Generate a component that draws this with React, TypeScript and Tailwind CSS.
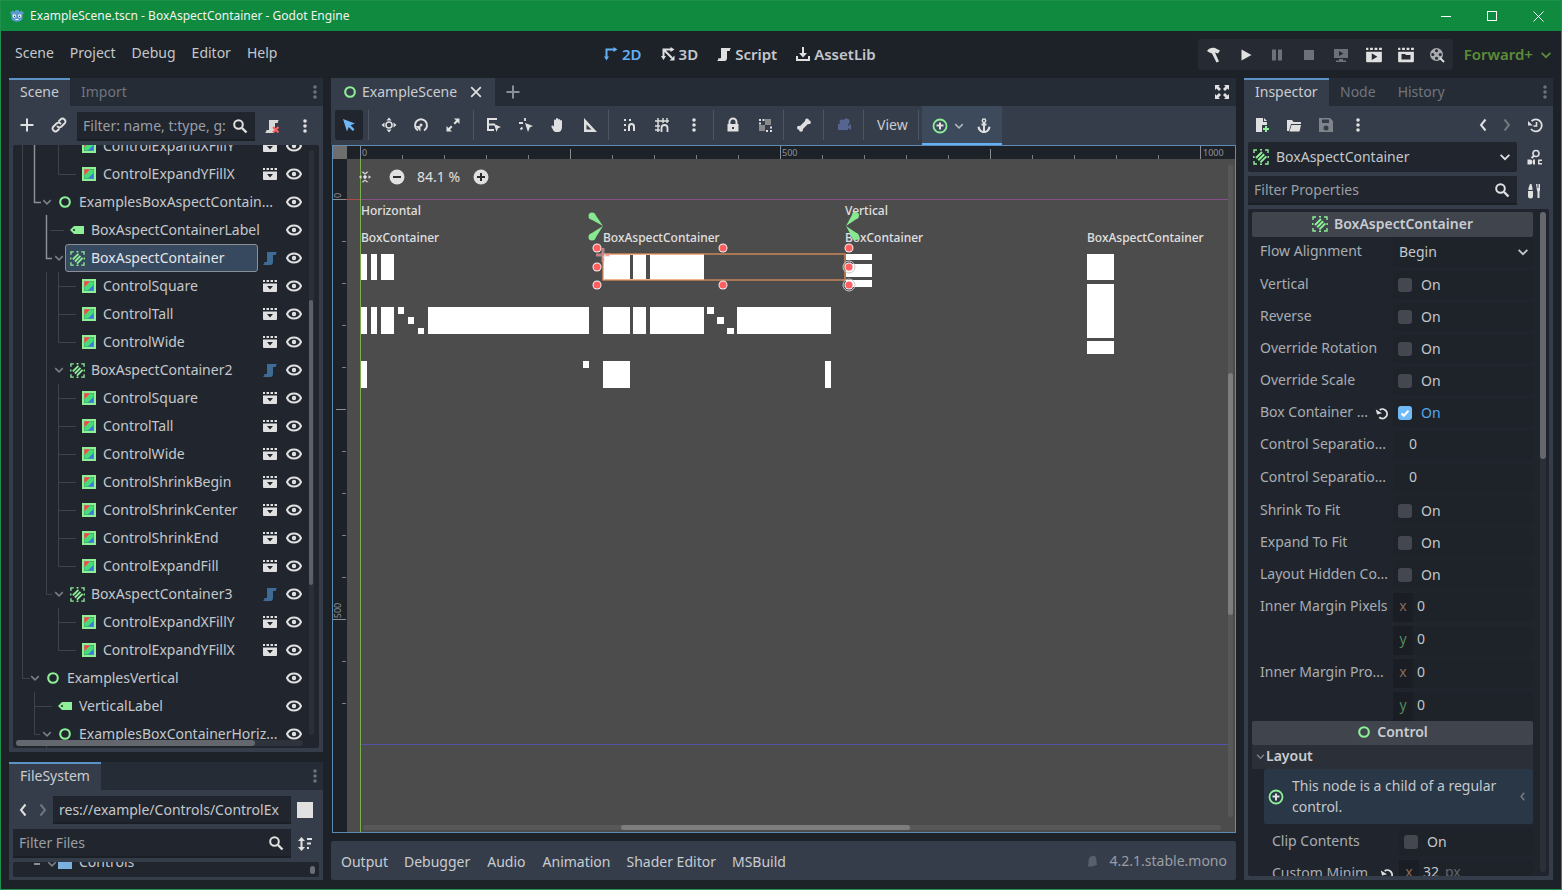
import type { ReactNode } from "react";

const green = "#8eef97";

function Svg({ size = 16, children, className }: { size?: number; children: ReactNode; className?: string }) {
  return (
    <svg width={size} height={size} viewBox="0 0 16 16" className={"shrink-0 " + (className ?? "")}>
      {children}
    </svg>
  );
}

const Dots = ({ color = "#e0e0e0" }: { color?: string }) => (
  <Svg>
    <circle cx="8" cy="3" r="1.800" fill={color} />
    <circle cx="8" cy="8" r="1.800" fill={color} />
    <circle cx="8" cy="13" r="1.800" fill={color} />
  </Svg>
);
const Search = () => (
  <Svg>
    <circle cx="6.500" cy="6.500" r="4.300" fill="none" stroke="#e0e0e0" strokeWidth="2" />
    <path d="M10 10l4.500 4.500" stroke="#e0e0e0" strokeWidth="2.400" />
  </Svg>
);
const Eye = () => (
  <Svg>
    <path d="M8 3.500C4.500 3.500 2 5.800 1 8c1 2.200 3.500 4.500 7 4.500s6-2.300 7-4.500c-1-2.200-3.500-4.500-7-4.500z" fill="none" stroke="#e0e0e0" strokeWidth="2" />
    <circle cx="8" cy="8" r="2.200" fill="#e0e0e0" />
  </Svg>
);
const Clapper = () => (
  <Svg>
    <path d="M1 2h2v2H1zM4.500 2h2.500v2H4.500zM8.500 2H11v2H8.500zM12.500 2H15v2h-2.500z" fill="#e0e0e0" />
    <path d="M1 5.500h14V13a1 1 0 0 1-1 1H2a1 1 0 0 1-1-1z" fill="#e0e0e0" />
    <path d="M5 8h6l-3 3.500z" fill="#21262e" />
  </Svg>
);
const ClapperPlay = () => (
  <Svg size={18}>
    <path d="M1 1.500h2v2H1zM4.500 1.500h2.500v2H4.500zM8.500 1.500H11v2H8.500zM12.500 1.500H15v2h-2.500z" fill="#e0e0e0" />
    <path d="M1 5h14v8.500a1 1 0 0 1-1 1H2a1 1 0 0 1-1-1z" fill="#e0e0e0" />
    <path d="M6 6.500l5 3-5 3z" fill="#262b33" />
  </Svg>
);
const ClapperFolder = () => (
  <Svg size={18}>
    <path d="M1 1.500h2v2H1zM4.500 1.500h2.500v2H4.500zM8.500 1.500H11v2H8.500zM12.500 1.500H15v2h-2.500z" fill="#e0e0e0" />
    <path d="M1 5h14v8.500a1 1 0 0 1-1 1H2a1 1 0 0 1-1-1z" fill="#e0e0e0" />
    <path d="M4 7h3l1 1h4v4H4z" fill="#262b33" />
  </Svg>
);
const Ring = ({ size = 14 }: { size?: number }) => (
  <Svg size={size}>
    <circle cx="8" cy="8" r="5.500" fill="none" stroke={green} strokeWidth="2.400" />
  </Svg>
);
const ColorSquare = () => (
  <Svg size={14}>
    <path d="M2.500 2.500h11v11h-11z" fill="#45dd78" />
    <path d="M2.500 2.500h7l-7 7z" fill="#ff4354" />
    <path d="M13.500 6.500v7h-7z" fill="#3a78e0" />
    <rect x="1.200" y="1.200" width="13.600" height="13.600" fill="none" stroke={green} strokeWidth="2.400" />
  </Svg>
);
const BoxAspect = ({ size = 16 }: { size?: number }) => (
  <Svg size={size}>
    <path d="M3 9L9 3M5.200 11.200L11.200 5.200M7.400 13.400L13.400 7.400" stroke={green} strokeWidth="2" fill="none" />
    <path d="M1 4V1h3M12 1h3v3M15 12v3h-3M4 15H1v-3M.8 7v2M15.200 7v2M7 .8h2M7 15.200h2" stroke={green} strokeWidth="1.400" fill="none" />
  </Svg>
);
const Tag = () => (
  <Svg>
    <path d="M1 8l4-4h10v8H5z" fill={green} />
    <circle cx="5" cy="8" r="1" fill="#21262e" />
  </Svg>
);
const scrollPath = "M5 2h10c-.8.500-1.200 1.500-1.200 3H11v7c0 2-1 3-2.500 3H1c.8-.5 1.300-1.300 1.500-3H5z";
const ScriptBlue = () => (
  <Svg>
    <path d={scrollPath} fill="#3f6c96" />
  </Svg>
);
const ScriptLight = () => (
  <Svg>
    <path d={scrollPath} fill="#e0e0e0" />
    <path d="M2.500 12.500h2" stroke="#9a9a9a" strokeWidth="1" />
  </Svg>
);
const ScriptRemove = () => (
  <Svg>
    <path d={scrollPath} fill="#d8d8d8" />
    <path d="M9 9l5.500 5.500M14.500 9L9 14.500" stroke="#ff5f5f" strokeWidth="2" />
  </Svg>
);
const Plus = ({ color = "#e0e0e0" }: { color?: string }) => (
  <Svg>
    <path d="M8 1.500v13M1.500 8h13" stroke={color} strokeWidth="2" />
  </Svg>
);
const LinkIcon = () => (
  <Svg>
    <g fill="none" stroke="#e0e0e0" strokeWidth="1.800" strokeLinecap="round">
      <path d="M6.500 9.500a2.800 2.800 0 0 0 4 0l3-3a2.800 2.800 0 0 0-4-4L8 4" />
      <path d="M9.500 6.500a2.800 2.800 0 0 0-4 0l-3 3a2.800 2.800 0 0 0 4 4L8 12" />
    </g>
  </Svg>
);
const Back = ({ color = "#e0e0e0", size = 16 }: { color?: string; size?: number }) => (
  <Svg size={size}>
    <path d="M10.500 2.500L6 8l4.500 5.500" fill="none" stroke={color} strokeWidth="2" />
  </Svg>
);
const Forward = ({ color = "#70757d" }: { color?: string }) => (
  <Svg>
    <path d="M5.500 2.500L10 8l-4.500 5.500" fill="none" stroke={color} strokeWidth="2" />
  </Svg>
);
const Chevron = ({ color = "#c4c7cc", size = 14 }: { color?: string; size?: number }) => (
  <Svg size={size}>
    <path d="M3 5.500L8 10.500l5-5" fill="none" stroke={color} strokeWidth="2" />
  </Svg>
);
const Reset = ({ color = "#e0e0e0" }: { color?: string }) => (
  <Svg size={15}>
    <path d="M5 4.200A5 5 0 1 1 4.500 12" fill="none" stroke={color} strokeWidth="2" />
    <path d="M1.500 3v5.500H7z" fill={color} transform="rotate(-15 4 6)" />
  </Svg>
);
const CircleBtn = ({ plus }: { plus?: boolean }) => (
  <Svg>
    <circle cx="8" cy="8" r="7.500" fill="#e0e0e0" />
    <path d={plus ? "M4 8h8M8 4v8" : "M4 8h8"} stroke="#2c2c2c" strokeWidth="2" />
  </Svg>
);
const GreenAdd = () => (
  <Svg>
    <circle cx="8" cy="8" r="6.500" fill="none" stroke={green} strokeWidth="1.800" />
    <path d="M4.500 7.500h7M8 4.500v7" stroke="#e0e0e0" strokeWidth="2" />
  </Svg>
);

// toolbar icons of the canvas
const ToolIcons: Record<string, ReactNode> = {
  select: (
    <Svg>
      <path d="M2 2l12 4.500-4.500 1.800 4 4-1.700 1.700-4-4L6 14.500z" fill="#6fb8f5" />
    </Svg>
  ),
  move: (
    <Svg>
      <path d="M8 .5l2.500 3h-5zM8 15.500l-2.500-3h5zM.5 8l3-2.500v5zM15.500 8l-3 2.500v-5z" fill="#e0e0e0" />
      <circle cx="8" cy="8" r="3" fill="none" stroke="#e0e0e0" strokeWidth="1.600" />
    </Svg>
  ),
  rotate: (
    <Svg>
      <path d="M5 13.500A6 6 0 1 1 11 13.500" fill="none" stroke="#e0e0e0" strokeWidth="2" />
      <path d="M2.500 9h5v5.500z" fill="#e0e0e0" />
      <circle cx="8" cy="8" r="1.500" fill="#e0e0e0" />
    </Svg>
  ),
  scale: (
    <Svg>
      <path d="M9 1.500h5.500V7L12.500 5 10 7.500 8.500 6 11 3.500zM7 14.500H1.500V9L3.500 11 6 8.500 7.500 10 5 12.500z" fill="#e0e0e0" />
    </Svg>
  ),
  list: (
    <Svg>
      <path d="M1 1h10v2H3v3.500h6v2H3V12h5v2H1z" fill="#e0e0e0" />
      <path d="M8 7l7 3-3 1.200L10.500 15z" fill="#e0e0e0" />
    </Svg>
  ),
  pivot: (
    <Svg>
      <path d="M1 6h4M7 1v3M2.500 12.500l2-2" stroke="#e0e0e0" strokeWidth="1.800" />
      <path d="M7 6l8 3-3 1.300L10 15z" fill="#e0e0e0" />
    </Svg>
  ),
  hand: (
    <Svg>
      <path d="M4 7V3.500a1 1 0 0 1 2 0V2a1 1 0 0 1 2 0v1a1 1 0 0 1 2 0v1a1 1 0 0 1 2 0v6c0 3-1.500 5-4 5H6c-2 0-3-2-4.500-5-.5-1.200 1-2 2-1L4 10z" fill="#e0e0e0" />
    </Svg>
  ),
  ruler: (
    <Svg>
      <path d="M2 1v14h13zM4.500 7.500l5 5h-5z" fill="#e0e0e0" fillRule="evenodd" />
    </Svg>
  ),
  snap: (
    <Svg>
      <path d="M6 14V9.500a3.500 3.500 0 0 1 7 0V14h-2V9.500a1.500 1.500 0 0 0-3 0V14z" fill="#e0e0e0" />
      <path d="M2 2h2v2H2zM7 2h2v2H7zM2 7h2v2H2zM2 12h2v2H2z" fill="#e0e0e0" />
    </Svg>
  ),
  grid: (
    <Svg>
      <path d="M1 4h14M1 9h5M1 13h5M4 1v14M9 1v5M13 1v5" stroke="#e0e0e0" strokeWidth="1.400" />
      <path d="M7.500 15v-4a3 3 0 0 1 6 0v4" fill="none" stroke="#e0e0e0" strokeWidth="1.800" />
    </Svg>
  ),
  dots: <Dots />,
  lock: (
    <Svg>
      <path d="M4.500 7V5a3.500 3.500 0 0 1 7 0v2" fill="none" stroke="#e0e0e0" strokeWidth="2" />
      <path d="M2.500 7h11v7.500h-11zM7 10v2h2v-2z" fill="#e0e0e0" fillRule="evenodd" />
    </Svg>
  ),
  group: (
    <Svg>
      <path d="M8 8h-6v6h6zM8 2h6v6H8z" fill="#8a8a8a" />
      <path d="M2 2h2v2H2zM5.500 2h2v2h-2zM2 5.500h2v2H2zM13 13h2v2h-2zM9 13h2v2H9zM13 9.500h2v2h-2z" fill="#e0e0e0" />
    </Svg>
  ),
  bone: (
    <Svg>
      <path d="M5 11l6-6" stroke="#e0e0e0" strokeWidth="4" />
      <circle cx="11" cy="3.500" r="2" fill="#e0e0e0" />
      <circle cx="12.800" cy="5.300" r="2" fill="#e0e0e0" />
      <circle cx="3" cy="10.800" r="2" fill="#e0e0e0" />
      <circle cx="5" cy="12.800" r="2" fill="#e0e0e0" />
    </Svg>
  ),
  camera: (
    <Svg>
      <circle cx="6" cy="5" r="2.500" fill="#56658f" />
      <circle cx="10.500" cy="4.500" r="3" fill="#56658f" />
      <path d="M2 7h10v6H2zM12 9l3-2v6l-3-2z" fill="#56658f" />
    </Svg>
  ),
  anchor: (
    <Svg>
      <circle cx="8" cy="2.800" r="1.700" fill="none" stroke="#e0e0e0" strokeWidth="1.500" />
      <path d="M8 4.500V14M5.500 6.500h5" stroke="#e0e0e0" strokeWidth="2" />
      <path d="M1.500 9l2-.5.500 1.500c.5 2 2 3 4 3s3.500-1 4-3l.5-1.500 2 .5c-.5 3.500-3 6-6.500 6S2 12.500 1.500 9z" fill="#e0e0e0" />
    </Svg>
  ),
};

type TreeRow = { name: string; level: number; icon: "ring" | "tag" | "box" | "color"; right?: "clap" | "script"; arrow?: boolean };

const treeRows: TreeRow[] = [
  { name: "ControlExpandXFillY", level: 3, icon: "color", right: "clap" },
  { name: "ControlExpandYFillX", level: 3, icon: "color", right: "clap" },
  { name: "ExamplesBoxAspectContain...", level: 1, icon: "ring", arrow: true },
  { name: "BoxAspectContainerLabel", level: 2, icon: "tag" },
  { name: "BoxAspectContainer", level: 2, icon: "box", right: "script", arrow: true },
  { name: "ControlSquare", level: 3, icon: "color", right: "clap" },
  { name: "ControlTall", level: 3, icon: "color", right: "clap" },
  { name: "ControlWide", level: 3, icon: "color", right: "clap" },
  { name: "BoxAspectContainer2", level: 2, icon: "box", right: "script", arrow: true },
  { name: "ControlSquare", level: 3, icon: "color", right: "clap" },
  { name: "ControlTall", level: 3, icon: "color", right: "clap" },
  { name: "ControlWide", level: 3, icon: "color", right: "clap" },
  { name: "ControlShrinkBegin", level: 3, icon: "color", right: "clap" },
  { name: "ControlShrinkCenter", level: 3, icon: "color", right: "clap" },
  { name: "ControlShrinkEnd", level: 3, icon: "color", right: "clap" },
  { name: "ControlExpandFill", level: 3, icon: "color", right: "clap" },
  { name: "BoxAspectContainer3", level: 2, icon: "box", right: "script", arrow: true },
  { name: "ControlExpandXFillY", level: 3, icon: "color", right: "clap" },
  { name: "ControlExpandYFillX", level: 3, icon: "color", right: "clap" },
  { name: "ExamplesVertical", level: 0, icon: "ring", arrow: true },
  { name: "VerticalLabel", level: 1, icon: "tag" },
  { name: "ExamplesBoxContainerHoriz...", level: 1, icon: "ring", arrow: true },
];

function NodeIcon({ kind }: { kind: TreeRow["icon"] }) {
  if (kind === "ring") return <Ring />;
  if (kind === "tag") return <Tag />;
  if (kind === "box") return <BoxAspect size={15} />;
  return <ColorSquare />;
}

function TreeLine({ row, index }: { row: TreeRow; index: number }) {
  const selected = index === 4;
  const indent = [40, 52, 64, 76][row.level];
  return (
    <div className="relative flex h-[28px] items-center" style={{ paddingLeft: indent - 13 }}>
      <div
        className={
          selected
            ? "ml-[1px] flex h-[28px] w-[193px] items-center rounded-[3px] border border-[#8a9098] bg-[#36495f] pl-[4px] text-[#e3e5e8]"
            : "flex h-[28px] items-center pl-[6px] text-[#c4c7cc]"
        }
      >
        <span className="flex w-[14px] justify-center">
          <NodeIcon kind={row.icon} />
        </span>
        <span className="ml-[7px] whitespace-nowrap">{row.name}</span>
      </div>
      {row.arrow && (
        <span className="absolute" style={{ left: indent - 24, top: 8 }}>
          <Chevron size={12} color="#7b8088" />
        </span>
      )}
      {row.right && (
        <span className="absolute left-[249px] top-[6px]">{row.right === "clap" ? <Clapper /> : <ScriptBlue />}</span>
      )}
      <span className="absolute left-[273px] top-[6px]">
        <Eye />
      </span>
    </div>
  );
}

function TreeGuides() {
  const dim = "#3e434b";
  const light = "#8b8f96";
  const childYs = [174, 286, 314, 342, 398, 426, 454, 482, 510, 538, 566, 622, 650];
  return (
    <svg className="absolute left-0 top-0" width="306" height="605" viewBox="13 145 306 605">
      <path d="M22.500 145V678.500H30" stroke={dim} fill="none" />
      <path d="M34.500 145V202.500H41" stroke={light} strokeWidth="1.500" fill="none" />
      <path d="M58.500 145V174.500" stroke={dim} fill="none" />
      <path d="M46.500 215V258.500H52" stroke={light} strokeWidth="1.500" fill="none" />
      <path d="M46.500 272V594.500H52" stroke={dim} fill="none" />
      <path d="M50 230.500H64" stroke={dim} fill="none" />
      <path d="M58.500 272V342.500M58.500 384V566.500M58.500 608V650.500" stroke={dim} fill="none" />
      {childYs.map((y) => (
        <path key={y} d={`M58.500 ${y + 0.5}H76`} stroke={dim} />
      ))}
      <path d="M34.500 692V734.500H40M34.500 706.500H52" stroke={dim} fill="none" />
      <path d="M46.500 745V750" stroke={dim} fill="none" />
    </svg>
  );
}

function DockTab({ title, others, width }: { title: string; others?: string[]; width: string }) {
  return (
    <div className="flex h-[28px] items-stretch bg-[#262c36]">
      <div className={"flex items-center border-t-2 border-[#5b93c9] bg-[#363d4a] pl-[11px] pb-[2px] text-[#c9ccd1] " + width}>{title}</div>
      {others?.map((o) => (
        <div key={o} className="ml-[11px] flex items-center text-[#6f757e]">
          {o}
        </div>
      ))}
      <div className="ml-auto flex items-center">
        <Dots color="#6c717a" />
      </div>
    </div>
  );
}

function LeftColumn() {
  return (
    <div className="flex w-[314px] flex-col">
      <div className="flex h-[674px] flex-col bg-[#363d4a]">
        <DockTab title="Scene" others={["Import"]} width="w-[61px]" />
        <div className="flex h-[39px] items-start pt-[6px]">
          <span className="ml-[10px] mt-[5px]"><Plus /></span>
          <span className="ml-[16px] mt-[5px]"><LinkIcon /></span>
          <div className="ml-[10px] flex h-[29px] w-[178px] items-center border-b-2 border-[#1b1f26] bg-[#21262e] pl-[6px] text-[#9a9ea5]">
            <span className="whitespace-nowrap">Filter: name, t:type, g:</span>
            <span className="ml-auto mr-[7px]"><Search /></span>
          </div>
          <span className="ml-[9px] mt-[6px]"><ScriptRemove /></span>
          <span className="ml-[17px] mt-[6px]"><Dots /></span>
        </div>
        <div className="relative mx-[4px] h-[603px] overflow-hidden rounded-[2px] bg-[#21262e]">
          <TreeGuides />
          <div className="-mt-[13px]">
            {treeRows.map((r, i) => (
              <TreeLine key={i} row={r} index={i} />
            ))}
          </div>
          <div className="absolute left-[296px] top-[5px] h-[585px] w-[5px] rounded-full bg-[#2a2f38]">
            <div className="mt-[150px] h-[285px] w-[4px] rounded-full bg-[#5c6068]" />
          </div>
          <div className="absolute left-[3px] top-[595px] h-[6px] w-[287px] rounded-full bg-[#2f343c]">
            <div className="h-[6px] w-[239px] rounded-full bg-[#64686e]" />
          </div>
        </div>
      </div>
      <div className="mt-[10px] flex h-[118px] flex-col bg-[#363d4a]">
        <DockTab title="FileSystem" width="w-[92px]" />
        <div className="mt-[6px] flex h-[28px] items-center">
          <span className="ml-[6px]"><Back /></span>
          <span className="ml-[4px]"><Forward /></span>
          <div className="ml-[2px] flex h-[28px] w-[238px] items-center overflow-hidden border-b-2 border-[#1b1f26] bg-[#21262e] pl-[6px] pt-[2px] text-[#c4c7cc]">
            <span className="whitespace-nowrap">res://example/Controls/ControlEx</span>
          </div>
          <div className="ml-[6px] h-[16px] w-[16px] bg-[#e0e0e0]" />
        </div>
        <div className="ml-[4px] mt-[5px] flex h-[29px] items-center">
          <div className="flex h-[29px] w-[278px] items-center border-b-2 border-[#1b1f26] bg-[#21262e] pl-[6px] text-[#9a9ea5]">
            <span>Filter Files</span>
            <span className="ml-auto mr-[7px]"><Search /></span>
          </div>
          <span className="ml-[6px]">
            <Svg>
              <path d="M4.500 3v10" stroke="#e0e0e0" strokeWidth="2" />
              <path d="M1 5l3.500-4L8 5zM1 11l3.500 4L8 11z" fill="#e0e0e0" />
              <path d="M10 3h5M10 7.500h4M10 12h2" stroke="#e0e0e0" strokeWidth="2" />
            </Svg>
          </span>
        </div>
        <div className="relative mx-[4px] mt-[4px] h-[15px] overflow-hidden rounded-[2px] bg-[#21262e]">
          <div className="absolute left-[45px] top-[0px] h-[7px] w-[14px] bg-[#79b0dd]" />
          <span className="absolute left-[66px] -top-[10px] text-[#c4c7cc]">Controls</span>
          <div className="absolute left-[21px] top-[1px] h-[1.500px] w-[6px] bg-[#8b8f96]" />
          <div className="absolute left-[33px] -top-[4px]"><Chevron size={12} color="#7b8088" /></div>
          <div className="absolute left-[297px] top-[4px] h-[8px] w-[5px] rounded-full bg-[#6a6e74]" />
        </div>
      </div>
    </div>
  );
}

const blocks = [
  [361, 254, 6, 26], [371, 254, 6, 26], [381, 254, 13, 26],
  [361, 307, 6, 27], [371, 307, 6, 27], [381, 307, 13, 27], [398, 307, 6, 7], [408, 317, 6, 7], [418, 328, 6, 6], [428, 307, 161, 27],
  [361, 361, 6, 27], [583, 361, 6, 7],
  [603, 254, 27, 26], [633, 254, 13, 26], [650, 254, 54, 26],
  [603, 307, 27, 27], [633, 307, 13, 27], [650, 307, 54, 27], [707, 307, 7, 7], [717, 317, 7, 7], [727, 328, 7, 6], [737, 307, 94, 27],
  [603, 361, 27, 27], [825, 361, 6, 27],
  [846, 254, 26, 6], [846, 264, 26, 13], [846, 280, 26, 7],
  [1087, 254, 27, 26], [1087, 284, 27, 54], [1087, 341, 27, 13],
];

const canvasLabels = [
  { t: "Horizontal", x: 361, y: 203 },
  { t: "BoxContainer", x: 361, y: 230 },
  { t: "BoxAspectContainer", x: 603, y: 230 },
  { t: "Vertical", x: 845, y: 203 },
  { t: "BoxContainer", x: 845, y: 230 },
  { t: "BoxAspectContainer", x: 1087, y: 230 },
];

const handles = [
  [597, 248], [723, 248], [849, 248], [597, 267], [849, 267], [597, 285], [723, 285], [849, 285],
];

function Viewport() {
  const topMinor = [402, 444, 486, 528, 612, 654, 696, 738, 822, 864, 906, 948, 1032, 1074, 1116, 1158];
  const leftMinor = [241, 283, 325, 367, 451, 493, 535, 577, 661, 703];
  return (
    <div className="relative h-[688px] border border-[#5d8bb5] bg-[#4c4c4c]">
      <div className="flex h-[13px] bg-[#1d2229]">
        <div className="h-[13px] w-[14px] bg-[#6e6e6e]" />
      </div>
      <div className="absolute left-0 top-[13px] h-[673px] w-[14px] bg-[#1d2229]" />
      {blocks.map((b, i) => (
        <div key={i} className="absolute bg-white" style={{ left: b[0] - 333, top: b[1] - 146, width: b[2], height: b[3] }} />
      ))}
      {canvasLabels.map((l, i) => (
        <span key={i} className="absolute whitespace-nowrap text-[12px] font-medium leading-[16px] text-[#e0e0e0]" style={{ left: l.x - 333, top: l.y - 146 }}>
          {l.t}
        </span>
      ))}
      <svg className="absolute left-0 top-0" width="903" height="686" viewBox="333 146 903 686">
        {/* guides */}
        <path d="M333 199.500H360" stroke="#b04a4a" />
        <path d="M361 199.500H1233" stroke="#87508a" />
        <path d="M360.500 146V832" stroke="#7ab04a" />
        <path d="M361 744.500H1233" stroke="#5252a8" />
        {/* ruler ticks */}
        {topMinor.map((x) => (
          <path key={x} d={`M${x + 0.5} 155V159`} stroke="#7c7f85" />
        ))}
        <path d="M570.500 149V159M990.500 149V159M780.500 146V159M1200.500 146V159M360.500 146V159" stroke="#8a8d92" />
        {leftMinor.map((y) => (
          <path key={y} d={`M342 ${y + 0.5}H346`} stroke="#7c7f85" />
        ))}
        <path d="M336 409.500H346M333 619.500H346M333 199.500H346" stroke="#8a8d92" />
        {/* selection */}
        <rect x="603" y="254" width="242" height="26" fill="none" stroke="#c98558" strokeWidth="1.500" />
        <path d="M603 254.500H704M603 279.500H704M603.500 254V280" stroke="#f2b48f" />
        <path d="M596 255H610M603 248V262" stroke="#d0b8b8" strokeWidth="3" opacity=".6" />
        <path d="M596 255H610M603 248V262" stroke="#ff6f6f" strokeWidth="1" strokeDasharray="3 2" />
        <circle cx="849" cy="267" r="6" fill="none" stroke="#c8c8c8" />
        <circle cx="849" cy="285" r="6" fill="none" stroke="#c8c8c8" />
        {handles.map((h, i) => (
          <g key={i}>
            <circle cx={h[0]} cy={h[1]} r="4.500" fill="#f2f2f2" />
            <circle cx={h[0]} cy={h[1]} r="3.500" fill="#ff5f5f" />
          </g>
        ))}
        {/* anchors */}
        <g fill="#86e88f">
          <circle cx="592" cy="216" r="3.500" />
          <path d="M589.500 218.500L594.500 213.500L603 226z" />
          <circle cx="592" cy="237" r="3.500" />
          <path d="M589.500 234.500L594.500 239.500L603 226z" />
          <circle cx="855.500" cy="215.500" r="3.500" />
          <path d="M858 218L853 213L846 226z" />
          <circle cx="855.500" cy="236.500" r="3.500" />
          <path d="M858 234L853 239L846 226z" />
        </g>
      </svg>
      {/* ruler numbers */}
      <span className="absolute left-[29px] top-[1px] text-[9px] leading-[11px] text-[#8f9298]">0</span>
      <span className="absolute left-[449px] top-[1px] text-[9px] leading-[11px] text-[#8f9298]">500</span>
      <span className="absolute left-[870px] top-[1px] text-[9px] leading-[11px] text-[#8f9298]">1000</span>
      <span className="absolute left-[1px] top-[45px] -rotate-90 text-[9px] leading-[11px] text-[#8f9298]">&nbsp;0</span>
      <span className="absolute -left-[3px] top-[459px] -rotate-90 text-[9px] leading-[11px] text-[#8f9298]">500</span>
      {/* zoom widget */}
      <div className="absolute left-[25px] top-[21px] flex items-center text-[#e0e0e0]">
        <Svg size={14}>
          <path d="M8 5.500l2.500 2.500L8 10.500 5.500 8z" fill="#e0e0e0" />
          <path d="M1 8l3-2v4zM15 8l-3-2v4zM4 2h2.500L8 4l1.500-2H12L8.500 5h-1zM4 14h2.500L8 12l1.500 2H12l-3.500-3h-1z" fill="#e0e0e0" />
        </Svg>
        <span className="ml-[17px]"><CircleBtn /></span>
        <span className="ml-[12px] w-[52px] whitespace-nowrap text-[14px]">84.1 %</span>
        <span className="ml-[4px]"><CircleBtn plus /></span>
      </div>
      {/* scrollbars */}
      <div className="absolute left-[895px] top-[19px] h-[652px] w-[5px] rounded-full bg-[#585858]">
        <div className="mt-[208px] h-[242px] w-[5px] rounded-full bg-[#7d7d7d]" />
      </div>
      <div className="absolute left-[30px] top-[679px] h-[5px] w-[858px] rounded-full bg-[#585858]">
        <div className="ml-[258px] h-[5px] w-[289px] rounded-full bg-[#7d7d7d]" />
      </div>
    </div>
  );
}

const Sep = ({ ml }: { ml: string }) => <div className={"h-[30px] w-px bg-[#4e5562] " + ml} />;

function CanvasToolbar() {
  const btn = "flex h-[30px] w-[32px] items-center justify-center";
  return (
    <div className="flex h-[39px] items-start bg-[#363d4a] pt-[4px]">
      <div className="ml-[4px] flex h-[30px] w-[28px] items-center justify-center rounded-[2px] bg-[#21262e]">{ToolIcons.select}</div>
      <Sep ml="ml-[5px]" />
      <div className="ml-[4px] flex">
        <div className={btn}>{ToolIcons.move}</div>
        <div className={btn}>{ToolIcons.rotate}</div>
        <div className={btn}>{ToolIcons.scale}</div>
      </div>
      <Sep ml="ml-[4px]" />
      <div className="ml-[4px] flex">
        <div className={btn}>{ToolIcons.list}</div>
        <div className={btn}>{ToolIcons.pivot}</div>
        <div className={btn}>{ToolIcons.hand}</div>
        <div className={btn}>{ToolIcons.ruler}</div>
      </div>
      <Sep ml="ml-[2px]" />
      <div className="ml-[5px] flex">
        <div className={btn}>{ToolIcons.snap}</div>
        <div className={btn}>{ToolIcons.grid}</div>
        <div className={btn}>{ToolIcons.dots}</div>
      </div>
      <Sep ml="ml-[3px]" />
      <div className="ml-[3px] flex">
        <div className={btn}>{ToolIcons.lock}</div>
        <div className={btn}>{ToolIcons.group}</div>
      </div>
      <Sep ml="ml-[2px]" />
      <div className={"ml-[4px] " + btn}>{ToolIcons.bone}</div>
      <Sep ml="ml-[3px]" />
      <div className={"ml-[4px] " + btn}>{ToolIcons.camera}</div>
      <Sep ml="ml-[3px]" />
      <div className="ml-[13px] flex h-[30px] items-center text-[#c9ccd1]">View</div>
      <Sep ml="ml-[10px]" />
      <div className="ml-[3px] -mt-[4px] flex h-[39px] w-[80px] items-center border-b-[2px] border-[#62b0f5] bg-[#3c4a5c] pl-[10px] pt-[2px]">
        <GreenAdd />
        <span className="ml-[5px]"><Chevron size={12} color="#b0b4ba" /></span>
        <span className="ml-[11px]">{ToolIcons.anchor}</span>
      </div>
    </div>
  );
}

function CenterColumn() {
  return (
    <div className="flex w-[905px] flex-col">
      <div className="flex h-[28px] items-center bg-[#262c36]">
        <div className="flex h-[28px] w-[164px] items-center bg-[#363d4a] pl-[12px] text-[#c9ccd1]">
          <Ring />
          <span className="ml-[5px]">ExampleScene</span>
          <span className="ml-[12px]">
            <Svg size={14}>
              <path d="M2.500 2.500l11 11M13.500 2.500l-11 11" stroke="#e0e0e0" strokeWidth="2" />
            </Svg>
          </span>
        </div>
        <span className="ml-[10px]"><Plus color="#8a8f96" /></span>
        <span className="ml-auto mr-[6px]">
          <Svg>
            <path d="M1 1h5L4.500 2.500 7 5 5 7 2.500 4.500 1 6zM15 1v5l-1.500-1.500L11 7 9 5l2.500-2.500L10 1zM1 15v-5l1.500 1.500L5 9l2 2-2.500 2.500L6 15zM15 15h-5l1.500-1.500L9 11l2-2 2.500 2.500L15 10z" fill="#e0e0e0" />
          </Svg>
        </span>
      </div>
      <CanvasToolbar />
      <div className="ml-[1px]">
        <Viewport />
      </div>
      <div className="mt-[8px] flex h-[39px] items-center rounded-[2px] bg-[#363d4a] pl-[10px] pr-[9px] pt-[2px] text-[#c9ccd1]">
        <span>Output</span>
        <span className="ml-[16px]">Debugger</span>
        <span className="ml-[17px]">Audio</span>
        <span className="ml-[17px]">Animation</span>
        <span className="ml-[16px]">Shader Editor</span>
        <span className="ml-[16px]">MSBuild</span>
        <span className="ml-auto -mt-[2px]">
          <Svg size={14}>
            <path d="M3 14c1-2 1-3 1-6s2-6 5-6c2.500 0 4 1.500 4 4s0 4 1 6c-3 2-8 3-11 2z" fill="#5a606b" />
          </Svg>
        </span>
        <span className="ml-[11px] -mt-[2px] text-[#9a9ea5]">4.2.1.stable.mono</span>
      </div>
    </div>
  );
}

function Check({ checked }: { checked?: boolean }) {
  return (
    <div className="flex items-center pl-[5px]">
      {checked ? (
        <div className="flex h-[14px] w-[14px] items-center justify-center rounded-[3px] bg-[#70baf7]">
          <svg width="10" height="10" viewBox="0 0 10 10">
            <path d="M1.500 5.500l2.300 2.300 4.700-5" fill="none" stroke="#fff" strokeWidth="2" />
          </svg>
        </div>
      ) : (
        <div className="h-[14px] w-[14px] rounded-[3px] bg-[#44474f]" />
      )}
      <span className={checked ? "ml-[9px] text-[#5aa6e8]" : "ml-[9px] text-[#c4c7cc]"}>On</span>
    </div>
  );
}

function PropRow({ label, h, children, reset }: { label?: string; h: string; children: ReactNode; reset?: boolean }) {
  const tall = h === "h-[29px]";
  return (
    <div className={"mb-[4px] flex " + h}>
      <div className={(tall ? "pb-[4px] " : "pb-[2px] ") + "flex w-[141px] items-center pl-[8px] text-[#a9adb3]"}>
        <span className="whitespace-nowrap">{label}</span>
        {reset && <span className="ml-auto mr-[3px] mt-[2px]"><Reset /></span>}
      </div>
      <div className="flex w-[140px] items-center rounded-[2px] bg-[#1e2329]">{children}</div>
    </div>
  );
}

const Num = ({ v }: { v: string }) => <span className="pb-[4px] pl-[16px] text-[#c4c7cc]">{v}</span>;

function Axis({ axis, v }: { axis: "x" | "y"; v: string }) {
  return (
    <>
      <span className={"flex h-full w-[20px] items-center justify-center rounded-[2px] bg-[#1a1d23] pb-[4px] " + (axis === "x" ? "text-[#8a6a58]" : "text-[#4f8a60]")}>{axis}</span>
      <span className="ml-[4px] pb-[4px] text-[#c4c7cc]">{v}</span>
    </>
  );
}

function RightColumn() {
  return (
    <div className="flex h-[802px] w-[309px] flex-col bg-[#363d4a]">
      <div className="flex h-[28px] items-stretch bg-[#262c36]">
        <div className="flex w-[85px] items-center border-t-2 border-[#5b93c9] bg-[#363d4a] pb-[2px] pl-[11px] text-[#c9ccd1]">Inspector</div>
        <div className="ml-[11px] flex items-center text-[#6f757e]">Node</div>
        <div className="ml-[22px] flex items-center text-[#6f757e]">History</div>
        <div className="ml-auto flex items-center pr-0"><Dots color="#6c717a" /></div>
      </div>
      <div className="flex h-[36px] items-center pt-[2px]">
        <span className="ml-[10px]">
          <Svg>
            <path d="M2 1h7v4h4v3H8v7H2z" fill="#e0e0e0" />
            <path d="M10 1l3 3h-3z" fill="#e0e0e0" />
            <path d="M12 9v6M9 12h6" stroke="#8eef97" strokeWidth="2" />
          </Svg>
        </span>
        <span className="ml-[16px]">
          <Svg>
            <path d="M1 3h5l1.500 2H15v2H5l-2 7H1zM5.500 8H15l-1.500 6.500H3.500z" fill="#e0e0e0" />
          </Svg>
        </span>
        <span className="ml-[16px]">
          <Svg>
            <path d="M1 1h11l3 3v11H1zM4 2.500V6h7V2.500zM8 8.500a2.500 2.500 0 1 0 0 5 2.500 2.500 0 0 0 0-5z" fill="#7f848b" fillRule="evenodd" />
          </Svg>
        </span>
        <span className="ml-[16px]"><Dots /></span>
        <span className="ml-[109px]"><Back /></span>
        <span className="ml-[8px]"><Forward /></span>
        <span className="ml-[12px]">
          <Svg>
            <path d="M4.500 4.200A6 6 0 1 1 4 12" fill="none" stroke="#e0e0e0" strokeWidth="1.800" />
            <path d="M1 4v4.500h4.800z" fill="#e0e0e0" />
            <path d="M9.500 5v4H6.500" fill="none" stroke="#e0e0e0" strokeWidth="1.600" />
          </Svg>
        </span>
      </div>
      <div className="ml-[4px] flex h-[30px] items-center">
        <div className="flex h-[30px] w-[269px] items-center rounded-[2px] bg-[#21262e] pl-[5px] text-[#c4c7cc]">
          <BoxAspect />
          <span className="ml-[7px]">BoxAspectContainer</span>
          <span className="ml-auto mr-[5px]"><Chevron color="#e0e0e0" /></span>
        </div>
        <span className="ml-[10px]">
          <Svg>
            <circle cx="9" cy="4.500" r="3" fill="none" stroke="#e0e0e0" strokeWidth="1.600" />
            <path d="M7 7L4.500 9" stroke="#e0e0e0" strokeWidth="2" />
            <path d="M.5 10.500h2.500a2 2 0 0 1 0 5H.5zM6 10.500h2v5H6zM11 10.500h4v1.500h-2.500v2H15v1.500h-4z" fill="#e0e0e0" />
          </Svg>
        </span>
      </div>
      <div className="ml-[4px] mt-[4px] flex h-[29px] items-center">
        <div className="flex h-[29px] w-[269px] items-center border-b-2 border-[#1b1f26] bg-[#21262e] pl-[6px] text-[#9a9ea5]">
          <span>Filter Properties</span>
          <span className="ml-auto mr-[7px]"><Search /></span>
        </div>
        <span className="ml-[10px]">
          <Svg>
            <path d="M2 1h1.500v4h1V1H6v6.500l-.5 1V15h-2V8.500L3 7.500z" fill="#e0e0e0" transform="translate(7 0)" />
            <path d="M1 8h5v5a2.500 2.500 0 0 1-5 0zM3 1h1.500l1 4v2h-4V5z" fill="#e0e0e0" />
          </Svg>
        </span>
      </div>
      <div className="relative mx-[4px] mt-[4px] h-[667px] overflow-hidden rounded-[2px] bg-[#20252d] pl-[4px] pt-[3px]">
        <div className="flex h-[25px] w-[281px] items-center justify-center rounded-[2px] bg-[#3f444d] pb-[1px] font-semibold text-[#c9ccd1]">
          <BoxAspect />
          <span className="ml-[6px]">BoxAspectContainer</span>
        </div>
        <PropRow label="Flow Alignment" h="h-[30px]">
          <span className="pl-[6px] text-[#c4c7cc]">Begin</span>
          <span className="ml-auto mr-[3px]"><Chevron color="#c4c7cc" /></span>
        </PropRow>
        <PropRow label="Vertical" h="h-[28px]"><Check /></PropRow>
        <PropRow label="Reverse" h="h-[28px]"><Check /></PropRow>
        <PropRow label="Override Rotation" h="h-[28px]"><Check /></PropRow>
        <PropRow label="Override Scale" h="h-[28px]"><Check /></PropRow>
        <PropRow label="Box Container ..." h="h-[28px]" reset><Check checked /></PropRow>
        <PropRow label="Control Separatio..." h="h-[29px]"><Num v="0" /></PropRow>
        <PropRow label="Control Separatio..." h="h-[29px]"><Num v="0" /></PropRow>
        <PropRow label="Shrink To Fit" h="h-[28px]"><Check /></PropRow>
        <PropRow label="Expand To Fit" h="h-[28px]"><Check /></PropRow>
        <PropRow label="Layout Hidden Co..." h="h-[28px]"><Check /></PropRow>
        <PropRow label="Inner Margin Pixels" h="h-[29px]"><Axis axis="x" v="0" /></PropRow>
        <PropRow h="h-[29px]"><Axis axis="y" v="0" /></PropRow>
        <PropRow label="Inner Margin Pro..." h="h-[29px]"><Axis axis="x" v="0" /></PropRow>
        <div className="flex h-[29px]">
          <div className="w-[141px]" />
          <div className="flex w-[140px] items-center rounded-[2px] bg-[#1e2329]"><Axis axis="y" v="0" /></div>
        </div>
        <div className="flex h-[24px] w-[281px] items-center justify-center rounded-[2px] bg-[#3f444d] pb-[2px] font-semibold text-[#c9ccd1]">
          <Ring />
          <span className="ml-[6px]">Control</span>
        </div>
        <div className="flex h-[24px] w-[281px] items-center bg-[#2b3038] pb-[2px] pl-[3px] font-semibold text-[#c9ccd1]">
          <Chevron size={11} color="#7b8088" />
          <span>Layout</span>
        </div>
        <div className="ml-[12px] mb-[4px] flex h-[55px] w-[269px] items-center rounded-[2px] bg-[#2a3746] pl-[4px] text-[#c4c7cc]">
          <GreenAdd />
          <span className="ml-[8px] w-[220px] pb-[2px] leading-[21px]">This node is a child of a regular control.</span>
          <span className="ml-auto mr-[5px]"><Back color="#7b8088" size={11} /></span>
        </div>
        <div className="mb-[4px] ml-[12px] flex h-[28px]">
          <div className="flex w-[135px] items-center pb-[2px] pl-[8px] text-[#a9adb3]">Clip Contents</div>
          <div className="flex w-[134px] items-center rounded-[2px] bg-[#1e2329]"><Check /></div>
        </div>
        <div className="ml-[12px] flex h-[28px]">
          <div className="flex w-[135px] items-center pb-[2px] pl-[8px] text-[#a9adb3]">
            <span className="whitespace-nowrap">Custom Minim...</span>
            <span className="ml-[1px] mt-[3px]"><Reset /></span>
          </div>
          <div className="flex w-[134px] items-center rounded-[2px] bg-[#1e2329]">
            <Axis axis="x" v="32" />
            <span className="ml-[6px] pb-[4px] text-[#5f646c]">px</span>
          </div>
        </div>
        <div className="absolute left-[292px] top-[3px] h-[660px] w-[6px] rounded-full bg-[#2a2f38]">
          <div className="h-[247px] w-[6px] rounded-full bg-[#64686e]" />
        </div>
      </div>
    </div>
  );
}

function TopBar() {
  return (
    <div className="flex h-[47px] items-center text-[#c4c7cc]">
      <div className="ml-[14px] flex w-[270px] gap-[16px] pb-[3px]">
        <span>Scene</span>
        <span>Project</span>
        <span>Debug</span>
        <span>Editor</span>
        <span>Help</span>
      </div>
      <div className="ml-[318px] flex items-center gap-[18px] pb-[2px] text-[15px] font-semibold">
        <span className="flex items-center gap-[3px] text-[#62b0f5]">
          <Svg>
            <path d="M1 10.500l2.500 4 2.500-4zM10.500 1l4 2.500-4 2.500z" fill="#62b0f5" />
            <path d="M3.500 11V3.500H11" fill="none" stroke="#62b0f5" strokeWidth="2" />
          </Svg>
          2D
        </span>
        <span className="flex items-center gap-[3px]">
          <Svg>
            <path d="M3.500 11V3.500H11M4 4l8 8" fill="none" stroke="#e0e0e0" strokeWidth="2" />
            <path d="M1 10l2.500 4L6 10zM10.500 1l4 2.500-4 2.500zM14.500 14.500H9.500l5-5z" fill="#e0e0e0" />
          </Svg>
          3D
        </span>
        <span className="flex items-center gap-[3px]">
          <ScriptLight />
          Script
        </span>
        <span className="flex items-center gap-[3px]">
          <Svg>
            <path d="M7 1h2v6h3l-4 4.500L4 7h3z" fill="#e0e0e0" />
            <path d="M1 10h2v3h10v-3h2v5H1z" fill="#e0e0e0" />
          </Svg>
          AssetLib
        </span>
      </div>
      <div className="ml-[322px] flex h-[31px] w-[255px] items-center rounded-[3px] bg-[#262b33] pl-[8px]">
        <div className="flex w-[32px] justify-start">
          <Svg>
            <path d="M1 4c2-3 5-3.500 8-3l5 2.500-2 3-3-1 4 9-2.500 1L6 6.500 3.500 5.500z" fill="#e0e0e0" />
          </Svg>
        </div>
        <div className="flex w-[32px] justify-start">
          <Svg><path d="M3.500 2.500l10 5.500-10 5.500z" fill="#e0e0e0" /></Svg>
        </div>
        <div className="flex w-[32px] justify-start">
          <Svg><path d="M3 2.500h4v11H3zM9 2.500h4v11H9z" fill="#6d7178" /></Svg>
        </div>
        <div className="flex w-[32px] justify-start">
          <Svg><path d="M3 3h10v10H3z" fill="#6d7178" /></Svg>
        </div>
        <div className="flex w-[32px] justify-start">
          <Svg>
            <path d="M1 2h14v9H1zM6 4v5l4.500-2.500zM6 12h4v1.500h3V15H3v-1.500h3z" fill="#6d7178" fillRule="evenodd" />
          </Svg>
        </div>
        <div className="flex w-[32px] justify-start"><ClapperPlay /></div>
        <div className="flex w-[32px] justify-start"><ClapperFolder /></div>
        <div className="flex w-[24px] justify-start">
          <Svg>
            <circle cx="7.500" cy="7.500" r="6.500" fill="#a8aaae" />
            <circle cx="7.500" cy="3.800" r="1.500" fill="#262b33" />
            <circle cx="7.500" cy="11.200" r="1.500" fill="#262b33" />
            <circle cx="3.800" cy="7.500" r="1.500" fill="#262b33" />
            <circle cx="11.200" cy="7.500" r="1.500" fill="#262b33" />
            <path d="M11 11l4 4" stroke="#e0e0e0" strokeWidth="1.800" />
          </Svg>
        </div>
      </div>
      <span className="ml-[11px] pb-[2px] text-[15px] font-semibold text-[#5c8c38]">Forward+</span>
      <span className="ml-[6px]"><Chevron color="#5c8c38" /></span>
    </div>
  );
}

function TitleBar() {
  return (
    <div className="flex h-[30px] items-center bg-[#0f8a3e] text-[12px] text-[#f2f2f2]">
      <span className="ml-[8px]">
        <Svg>
          <path d="M1 5l2.500-2.500L5.500 4 6.500 2h3l1 2 2-1.500L15 5l-1.500 1.500V11c-2 3.500-9 3.500-11 0V6.500z" fill="#5a9bd0" />
          <circle cx="5.300" cy="8" r="1.800" fill="#fff" />
          <circle cx="10.700" cy="8" r="1.800" fill="#fff" />
          <circle cx="5.500" cy="8.200" r=".8" fill="#2a3a4a" />
          <circle cx="10.500" cy="8.200" r=".8" fill="#2a3a4a" />
          <path d="M6.500 11.500h3" stroke="#fff" strokeWidth="1" />
        </Svg>
      </span>
      <span className="ml-[5px] mb-[1px] whitespace-nowrap">ExampleScene.tscn - BoxAspectContainer - Godot Engine</span>
      <div className="ml-auto flex h-[30px]">
        <div className="flex w-[46px] items-center justify-center">
          <div className="h-px w-[10px] bg-white" />
        </div>
        <div className="flex w-[46px] items-center justify-center">
          <div className="h-[10px] w-[10px] border border-white" />
        </div>
        <div className="flex w-[46px] items-center justify-center">
          <svg width="11" height="11" viewBox="0 0 11 11">
            <path d="M.5.5l10 10M10.500.5l-10 10" stroke="#fff" />
          </svg>
        </div>
      </div>
    </div>
  );
}

export default function App() {
  return (
    <div className="h-[890px] w-[1562px] overflow-hidden border border-[#1f8f4c] bg-[#1d2229] text-[14px] leading-[20px] [font-family:'Noto_Sans',sans-serif]">
      <TitleBar />
      <TopBar />
      <div className="ml-[8px] flex gap-[8px]">
        <LeftColumn />
        <CenterColumn />
        <RightColumn />
      </div>
    </div>
  );
}
